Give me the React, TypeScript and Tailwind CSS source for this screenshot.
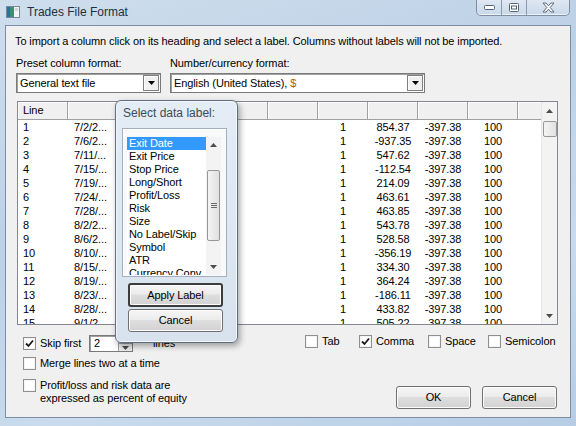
import React from 'react';

const rows = [
  ['1', '7/2/2...', '854.37'],
  ['2', '7/6/2...', '-937.35'],
  ['3', '7/11/...', '547.62'],
  ['4', '7/15/...', '-112.54'],
  ['5', '7/19/...', '214.09'],
  ['6', '7/24/...', '463.61'],
  ['7', '7/28/...', '463.85'],
  ['8', '8/2/2...', '543.78'],
  ['9', '8/6/2...', '528.58'],
  ['10', '8/10/...', '-356.19'],
  ['11', '8/15/...', '334.30'],
  ['12', '8/19/...', '364.24'],
  ['13', '8/23/...', '-186.11'],
  ['14', '8/28/...', '433.82'],
  ['15', '9/1/2...', '505.22'],
];

const labels = [
  'Exit Date',
  'Exit Price',
  'Stop Price',
  'Long/Short',
  'Profit/Loss',
  'Risk',
  'Size',
  'No Label/Skip',
  'Symbol',
  'ATR',
  'Currency Conv.',
];

const Check = ({ checked }: { checked?: boolean }) => (
  <span className="w-[13px] h-[13px] shrink-0 border border-[#8e8f8f] bg-white flex items-center justify-center shadow-[inset_1px_1px_0_#f4f4f4,inset_-1px_-1px_0_#f4f4f4]">
    {checked && (
      <svg width="9" height="9" viewBox="0 0 9 9">
        <path d="M1 4.5 L3.5 7 L8 1.5" fill="none" stroke="#1a1a1a" strokeWidth="1.8" />
      </svg>
    )}
  </span>
);

const Arrow = ({ up }: { up?: boolean }) => (
  <svg width="7" height="4" viewBox="0 0 7 4">
    <path d={up ? 'M0 4 L3.5 0 L7 4 Z' : 'M0 0 L7 0 L3.5 4 Z'} fill="#4d4d4d" />
  </svg>
);

const ComboArrow = () => (
  <span className="w-[16px] h-[16px] mr-[1px] border border-[#808080] bg-[#f0f0f0] shadow-[inset_1px_1px_0_#ffffff] flex items-center justify-center">
    <svg width="7" height="4" viewBox="0 0 7 4">
      <path d="M0 0 L7 0 L3.5 4 Z" fill="#000" />
    </svg>
  </span>
);

const Button = ({ children, w, focused }: { children: React.ReactNode; w: string; focused?: boolean }) => (
  <button
    className={`${w} ${
      focused ? 'border-[#3c3c3c] border-2' : 'border border-[#707070]'
    } h-full rounded-[3px] bg-[linear-gradient(#f6f6f6,#ececec_45%,#dedede_50%,#d2d2d2)] text-black flex items-center justify-center shadow-[inset_0_0_0_1px_#fcfcfc]`}
  >
    {children}
  </button>
);

export default function App() {
  return (
    <div className="w-[576px] h-[426px] overflow-hidden relative flex flex-col bg-[linear-gradient(160deg,#cfdeed,#bcd0e6_40%,#c9dbed_70%,#b7cde5)] font-['Liberation_Sans',Arial,sans-serif] text-[11px] tracking-[-0.1px] text-black leading-[15px]">
      {/* title bar */}
      <div className="h-[25px] flex items-start shrink-0">
        <svg className="ml-[6px] mt-[6px]" width="14" height="12" viewBox="0 0 14 12">
          <rect x="0.5" y="0.5" width="13" height="11" fill="#f2f4f6" stroke="#7c8794" />
          <rect x="1" y="1" width="7" height="10" fill="#3c8f7a" />
          <rect x="1" y="1" width="3" height="10" fill="#2a6fa8" />
          <rect x="9" y="2" width="3" height="3" fill="#cfd6de" />
        </svg>
        <span className="ml-[7px] mt-[5px] text-[12px] tracking-normal text-[#1e2f45]">Trades File Format</span>
        <div className="ml-auto mr-[6px] h-[16px] flex border border-t-0 border-[#7d8fa5] rounded-b-[5px] bg-[linear-gradient(#dfe8f2,#c9d8e8)] shadow-[inset_0_-1px_0_#eef3f8]">
          <div className="w-[25px] flex items-center justify-center border-r border-[#8a9bb0]">
            <svg width="11" height="5" viewBox="0 0 11 5">
              <rect x="0.5" y="0.5" width="10" height="4" rx="1" fill="#fff" stroke="#53647a" />
            </svg>
          </div>
          <div className="w-[25px] flex items-center justify-center border-r border-[#8a9bb0]">
            <svg width="10" height="9" viewBox="0 0 10 9">
              <rect x="0.5" y="0.5" width="9" height="8" rx="1" fill="#fff" stroke="#53647a" />
              <rect x="2.5" y="3" width="5" height="3" fill="none" stroke="#53647a" />
            </svg>
          </div>
          <div className="w-[42px] flex items-center justify-center">
            <svg width="13" height="11" viewBox="0 0 13 11">
              <path
                d="M1 1 H4 L6.5 3.8 L9 1 H12 L8.2 5.5 L12 10 H9 L6.5 7.2 L4 10 H1 L4.8 5.5 Z"
                fill="#fff"
                stroke="#5a6b80"
                strokeWidth="1"
                strokeLinejoin="round"
              />
            </svg>
          </div>
        </div>
      </div>

      {/* client area */}
      <div className="mx-[5px] h-[393px] shrink-0 border border-[#7b8ea6] bg-[#f0f0f0] relative flex flex-col">
        <p className="mt-[8px] ml-[9px] h-[15px] whitespace-nowrap">
          To import a column click on its heading and select a label. Columns without labels will not be imported.
        </p>

        <div className="mt-[7px] ml-[10px] flex">
          <div className="w-[154px] flex flex-col">
            <span className="h-[15px]">Preset column format:</span>
            <div className="mt-[2px] w-[145px] h-[20px] border border-[#7a7a7a] bg-white flex items-center shadow-[inset_1px_1px_0_#a0a0a0]">
              <span className="ml-[3px] flex-1">General text file</span>
              <ComboArrow />
            </div>
          </div>
          <div className="flex flex-col">
            <span className="h-[15px]">Number/currency format:</span>
            <div className="mt-[2px] w-[255px] h-[20px] border border-[#7a7a7a] bg-white flex items-center shadow-[inset_1px_1px_0_#a0a0a0]">
              <span className="ml-[3px] flex-1">
                English (United States), <span className="text-[#b35a00]">$</span>
              </span>
              <ComboArrow />
            </div>
          </div>
        </div>

        {/* data grid */}
        <div className="mt-[8px] ml-[11px] w-[541px] h-[224px] border border-[#828790] bg-white flex overflow-hidden">
          <div className="flex-1 flex flex-col overflow-hidden">
            <div className="h-[18px] shrink-0 flex bg-[#f0f0f0]">
              {Array.from({ length: 11 }).map((_, i) => (
                <div
                  key={i}
                  className="w-[50px] shrink-0 border-r border-b border-[#a0a0a0] shadow-[inset_1px_1px_0_#ffffff] pl-[5px] flex items-center"
                >
                  {i === 0 ? 'Line' : ''}
                </div>
              ))}
            </div>
            {rows.map(([n, d, pl]) => (
              <div key={n} className="h-[14px] shrink-0 flex leading-[14px]">
                <div className="w-[50px] shrink-0 pl-[5px]">{n}</div>
                <div className="w-[50px] shrink-0 pl-[6px]">{d}</div>
                <div className="w-[200px] shrink-0" />
                <div className="w-[50px] shrink-0 text-center">1</div>
                <div className="w-[50px] shrink-0 text-center">{pl}</div>
                <div className="w-[50px] shrink-0 text-center">-397.38</div>
                <div className="w-[50px] shrink-0 text-center">100</div>
              </div>
            ))}
          </div>
          <div className="w-[16px] shrink-0 bg-[#f3f3f3] border-l border-[#e6e6e6] flex flex-col items-center">
            <div className="h-[17px] flex items-center justify-center">
              <Arrow up />
            </div>
            <div className="mt-[2px] w-[14px] h-[16px] rounded-[2px] border border-[#979797] bg-[linear-gradient(90deg,#f4f4f4,#e2e2e2)]" />
            <div className="flex-1" />
            <div className="h-[17px] flex items-center justify-center">
              <Arrow />
            </div>
          </div>
        </div>

        {/* options */}
        <div className="ml-[17px] flex">
          <div className="w-[282px] flex flex-col">
            <div className="mt-[10px] h-[17px] flex items-center">
              <Check checked />
              <span className="ml-[4px] w-[49px]">Skip first</span>
              <div className="w-[44px] h-[17px] border border-[#7a7a7a] bg-white flex shadow-[inset_1px_1px_0_#a0a0a0]">
                <span className="ml-[4px] flex-1 leading-[15px]">2</span>
                <div className="w-[14px] flex flex-col border-l border-[#a0a0a0]">
                  <div className="flex-1 bg-[#ececec] border-b border-[#a0a0a0] flex items-center justify-center">
                    <Arrow up />
                  </div>
                  <div className="flex-1 bg-[#ececec] flex items-center justify-center">
                    <Arrow />
                  </div>
                </div>
              </div>
              <span className="ml-[20px]">lines</span>
            </div>
            <div className="mt-[3px] h-[17px] flex items-center">
              <Check />
              <span className="ml-[4px]">Merge lines two at a time</span>
            </div>
            <div className="mt-[7px] flex items-start">
              <Check />
              <span className="ml-[4px] leading-[13px]">
                Profit/loss and risk data are
                <br />
                expressed as percent of equity
              </span>
            </div>
          </div>

          <div className="w-[252px] flex flex-col">
            <div className="mt-[10px] h-[13px] flex items-center">
              <div className="w-[54px] flex items-center">
                <Check />
                <span className="ml-[4px]">Tab</span>
              </div>
              <div className="w-[69px] flex items-center">
                <Check checked />
                <span className="ml-[4px]">Comma</span>
              </div>
              <div className="w-[60px] flex items-center">
                <Check />
                <span className="ml-[4px]">Space</span>
              </div>
              <div className="flex items-center">
                <Check />
                <span className="ml-[4px]">Semicolon</span>
              </div>
            </div>
            <div className="mt-[38px] h-[23px] flex justify-end gap-[11px]">
              <Button w="w-[75px]">OK</Button>
              <Button w="w-[75px]">Cancel</Button>
            </div>
          </div>
        </div>

        {/* select data label popup */}
        <div className="absolute left-[109px] top-[74px] w-[123px] h-[243px] rounded-[6px] border border-[#5f6f82] bg-[linear-gradient(#e4ecf5,#d7e2ee)] shadow-[2px_3px_6px_rgba(0,0,0,0.35),inset_0_0_0_1px_#f3f7fb] flex flex-col">
          <span className="mt-[5px] ml-[7px] text-[12px] tracking-normal text-[#404a55]">Select data label:</span>
          <div className="mt-[7px] ml-[6px] w-[105px] h-[149px] border border-[#a3afbd] bg-[#f7f9fb] shadow-[inset_1px_1px_0_#ffffff] pt-[8px] pl-[4px]">
            <div className="w-[94px] h-[138px] bg-white flex overflow-hidden">
              <div className="flex-1 flex flex-col overflow-hidden leading-[13px]">
                {labels.map((l, i) => (
                  <div
                    key={l}
                    className={`h-[13px] shrink-0 pl-[2px] whitespace-nowrap ${
                      i === 0 ? 'bg-[#3399ff] text-white' : ''
                    }`}
                  >
                    {l}
                  </div>
                ))}
              </div>
              <div className="w-[15px] shrink-0 bg-[#f3f3f3] flex flex-col items-center">
                <div className="h-[16px] flex items-center justify-center">
                  <Arrow up />
                </div>
                <div className="mt-[17px] w-[13px] h-[71px] rounded-[2px] border border-[#979797] bg-[linear-gradient(90deg,#f4f4f4,#e0e0e0)] flex items-center justify-center">
                  <svg width="6" height="6" viewBox="0 0 6 6">
                    <path d="M0 0.5 H6 M0 2.5 H6 M0 4.5 H6" stroke="#6a6a6a" strokeWidth="1" />
                  </svg>
                </div>
                <div className="flex-1" />
                <div className="h-[16px] flex items-center justify-center">
                  <Arrow />
                </div>
              </div>
            </div>
          </div>
          <div className="mt-[6px] ml-[12px] h-[24px] flex">
            <Button w="w-[95px]" focused>
              Apply Label
            </Button>
          </div>
          <div className="mt-[2px] ml-[12px] h-[23px] flex">
            <Button w="w-[95px]">Cancel</Button>
          </div>
        </div>
      </div>
    </div>
  );
}
